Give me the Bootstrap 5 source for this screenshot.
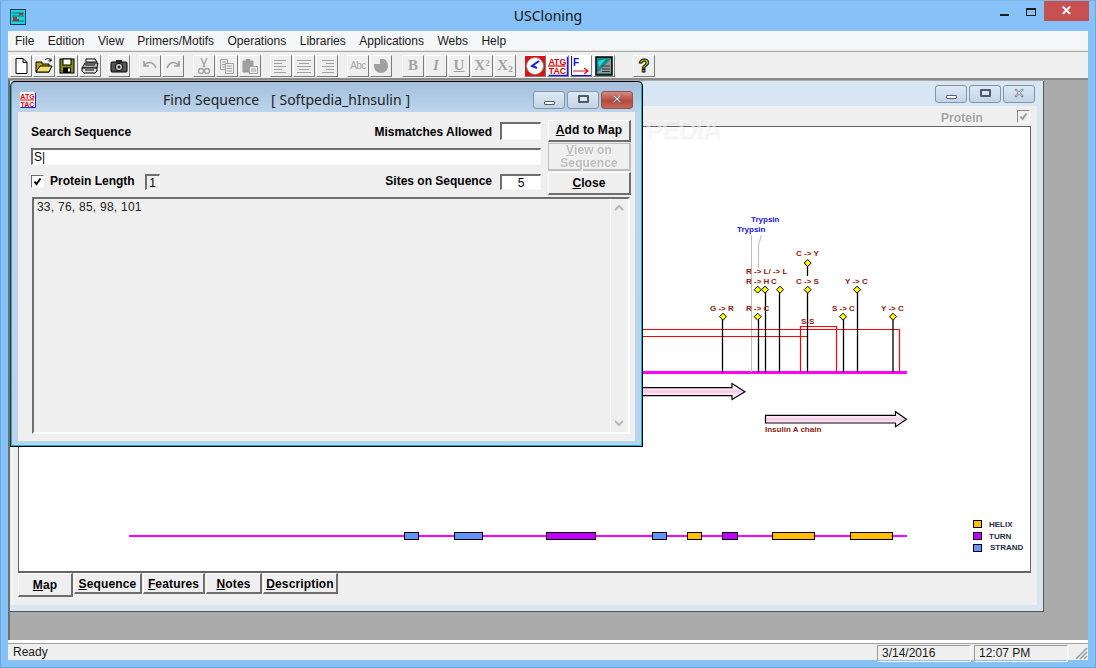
<!DOCTYPE html>
<html lang="en">
<head>
<meta charset="utf-8">
<title>USCloning</title>
<link href="https://cdn.jsdelivr.net/npm/bootstrap@5.3.0/dist/css/bootstrap.min.css" rel="stylesheet">
<style>
html,body{margin:0;width:1096px;height:668px;overflow:hidden}
body{background:#86c1f8;font-family:"Liberation Sans",sans-serif;font-size:12px;color:#000}
.appwin{width:1096px;height:668px;border:1px solid #6ea5d8;border-top-color:#7fb3e4}
.apptitle{height:30px;padding:6px 0 0 9px;position:relative}
.apptitle-text{position:absolute;left:0;right:0;top:5px;text-align:center;font:14px "Noto Sans",sans-serif;color:#111}
.ctl-min{position:absolute;left:999px;top:13px;width:9px;height:2px;background:#1c1c1c}
.ctl-max{position:absolute;left:1025px;top:7px;width:10px;height:8px;border:1px solid #1c1c1c;border-top-width:2px}
.ctl-close{position:absolute;left:1043px;top:0;width:45px;height:20px;background:#c75050;color:#fff;text-align:center;font:bold 13px/20px "Liberation Sans",sans-serif}
.shell{margin:0 7px;height:629px;background:#f0f0f0}
.menubar{height:20px;background:#f5f6f8;padding-left:7px;font-size:12px;color:#1a1a1a;line-height:20px;gap:13.500px;border-bottom:1px solid #e6e6e6}
.toolbar{height:29px;background:#efefef;border-top:1px solid #a9a9a9;border-bottom:2px solid #8a8a8a;padding:3px 0 0 2px}
.tbtn{width:22px;height:22px;margin-right:1px;background:#efefef;border:1px solid;border-color:#fff #7c7c7c #7c7c7c #fff;flex:none;padding:0;font-family:"Liberation Serif",serif;font-weight:700;font-size:15px;line-height:19px;text-align:center;color:#a4a4a4;overflow:hidden}
.tbtn svg{display:block;width:20px;height:20px}
.tsp{width:8px;flex:none}
.mdi{height:560px;background:#ababab;border-left:2px solid #6f6f6f;padding-top:1px;position:relative}
.childwin{width:1034px;height:531px;background:#d8e6f4;border-right:1px solid #555;border-bottom:1px solid #555;position:relative}
.childbtns{height:25px;padding:4px 8px 0 0;gap:2px}
.wbtn{width:32px;height:18px;border:1px solid #7f95ad;border-radius:3px;background:linear-gradient(#dfe9f4,#c3d3e5);position:relative;text-align:center;flex:none}
.wbtn.shut{background:linear-gradient(#d88a80,#b8463a 55%,#c46a5c);border-color:#8c5550}
.g-min{display:inline-block;width:11px;height:4px;margin-top:9px;background:#fff;border:1px solid #55606e;border-radius:1px;vertical-align:top}
.g-max{display:inline-block;width:11px;height:8px;margin-top:3px;border:2px solid #4d5a6a;border-radius:1px;background:#dbe5ef;vertical-align:top}
.g-x{display:block;font:bold 14px/15px "DejaVu Sans",sans-serif;color:#fff;-webkit-text-stroke:.6px #55606e}
.childbody{margin-left:1px;width:1026px;height:499px;background:#efefef;border-left:1px solid #fff;padding-left:6px}
.proto{height:20px;padding:0 7px 0 0;color:#a3a3a3;font-weight:700;font-size:12px;letter-spacing:.1px;justify-content:flex-end;align-items:center;text-shadow:1px 1px 0 #fff}
.proto span{margin-right:34px;margin-top:3px}
.chk-off{width:13px;height:13px;border:1px solid;border-color:#888 #fff #fff #888}
.chk-off svg,.chk-on svg{display:block;width:100%;height:100%}
.canvas{width:1013px;height:447px;background:#fff;border:1px solid #646464;border-bottom-width:2px;display:block;margin-left:0}
.canvas svg{display:block;width:1011px;height:444px}
.mapred{font:bold 8px "Liberation Sans",sans-serif;fill:#8a1a10}
.mapblue{font:bold 8px "Liberation Sans",sans-serif;fill:#1616e6}
.mapleg{font:bold 8px "Liberation Sans",sans-serif;fill:#222c48}
.tabsrow{gap:1px;margin-top:0;align-items:flex-start}
.tabx{height:21px;background:#efefef;border:1px solid;border-color:#fff #6e6e6e #6e6e6e #fff;border-bottom-width:2px;border-right-width:2px;font-weight:700;font-size:12px;letter-spacing:.15px;line-height:21px;text-align:center;color:#000;flex:none}
.tabx.on{height:24px;line-height:23px}
.dlg{position:absolute;left:0;top:1px;width:633px;height:366px;background:linear-gradient(#a3bfdc,#bdd5ec 30px,#bad3ec);border:1px solid #000;border-left-color:#333;box-shadow:inset -1px -1px 0 #18b4d8,inset 1px 0 0 #18b4d8;border-radius:5px 5px 0 0}
.dlg-head{height:30px;position:relative}
.dlg-ico{position:absolute;left:9px;top:10px}
.dlg-title{position:absolute;left:152px;top:8px;font:14px "Noto Sans",sans-serif;word-spacing:.3px;color:#222;white-space:pre}
.dlg-btns{position:absolute;left:522px;top:9px;gap:2px}
.dlg-client{position:absolute;left:7px;top:30px;width:617px;height:329px;background:#efefef;padding:8px 0 0 13px}
.dlab{font-weight:700;font-size:12px;line-height:16px}
.sunk{background:#fff;border:1px solid;border-color:#6e6e6e #f8f8f8 #f8f8f8 #6e6e6e;border-top-width:2px;border-left-width:2px;line-height:14px;flex:none}
.chk-on{width:13px;height:13px;background:#fff;border:1px solid;border-color:#6e6e6e #f8f8f8 #f8f8f8 #6e6e6e;flex:none}
.dbtn{width:83px;padding:0;background:#efefef;border:1px solid;border-color:#fff #6e6e6e #6e6e6e #fff;border-bottom-width:2px;border-right-width:2px;border-radius:0;font-weight:700;font-size:12px;letter-spacing:.1px;line-height:13px;color:#000;font-family:"Liberation Sans",sans-serif}
.dbtn.off{color:#a3a3a3;text-shadow:1px 1px 0 #fff}
.results{margin:2px 0 0 1px;width:598px;height:237px;border:2px solid;border-color:#6e6e6e #fff #fff #6e6e6e;padding:0 0 0 3px;position:relative;line-height:16px;letter-spacing:.2px;word-spacing:.2px;color:#222}
.rscroll{position:absolute;right:0;top:0;bottom:0;width:18px;border-left:1px solid #fff;text-align:center}
.wmark{position:absolute;left:635px;top:36px;font:bold 26px/26px "Liberation Sans",sans-serif;letter-spacing:-1px;color:rgba(255,255,255,.55);text-shadow:1px 1px 2px rgba(0,0,0,.07);pointer-events:none}
.statusbar{height:20px;background:#efefef;border-top:3px solid #fff;position:relative;box-shadow:inset 0 1px 0 #a0a0a0}
.spanel{position:absolute;top:2px;height:17px;border:1px solid;border-color:#9a9a9a #fff #fff #9a9a9a;padding-left:4px;font-size:12px;line-height:15px;color:#1a1a1a}
</style>
</head>
<body>
<svg width="0" height="0" class="position-absolute">
<defs>
<symbol id="atg" viewBox="0 0 16 16"><rect width="16" height="16" fill="#fff"/><path d="M.5 15.500H15.500V.5" fill="none" stroke="#1a1ae0"/><path d="M0 8H14" stroke="#e00000"/><text x="7.500" y="7" text-anchor="middle" font-family="Liberation Sans" font-weight="700" font-size="7" fill="#e00000">ATG</text><text x="7.500" y="14.500" text-anchor="middle" font-family="Liberation Sans" font-weight="700" font-size="7" fill="#e00000">TAC</text></symbol>
</defs>
</svg>
<div class="appwin">
  <div class="apptitle">
    <svg width="16" height="16" viewBox="0 0 16 16"><rect x=".5" y=".5" width="15" height="15" fill="#16d8d8" stroke="#0a3a5a"/><path d="M2 4H14M2 7H14M2 12H14" stroke="#086a8a"/><path d="M3 9H7M9 5H13M3 11H9" stroke="#e00000" stroke-width="1.300"/></svg>
    <div class="apptitle-text">USCloning</div>
    <div class="ctl-min"></div><div class="ctl-max"></div><div class="ctl-close">✕</div>
  </div>
  <div class="shell">
    <div class="menubar d-flex">
      <span>File</span><span>Edition</span><span>View</span><span>Primers/Motifs</span><span>Operations</span><span>Libraries</span><span>Applications</span><span>Webs</span><span>Help</span>
    </div>
    <div class="toolbar d-flex">
      <div class="tbtn"><svg viewBox="0 0 20 20"><path d="M5 2.500H12L16 6.500V17.500H5Z M12 2.500V6.500H16" fill="#fff" stroke="#000"/></svg></div>
      <div class="tbtn"><svg viewBox="0 0 20 20"><path d="M2 16V6H8V8H15V16Z" fill="#b8a020" stroke="#000"/><path d="M2 16L6 10H18L15 16Z" fill="#f0e060" stroke="#000"/><path d="M11 4C13 2 16 2 17 5M17 5V2.500M17 5H14.500" fill="none" stroke="#000"/></svg></div>
      <div class="tbtn"><svg viewBox="0 0 20 20"><rect x="3" y="3" width="14" height="14" fill="#8a8a10" stroke="#000"/><rect x="6" y="3" width="8" height="6" fill="#fff" stroke="#000"/><rect x="6" y="11.500" width="8" height="5.500" fill="#000"/><rect x="11" y="12.500" width="2" height="3" fill="#fff"/></svg></div>
      <div class="tbtn"><svg viewBox="0 0 20 20"><path d="M6 3H15L17 6H6Z" fill="#fff" stroke="#000"/><path d="M2 12L5 7H18L17 12Z" fill="#bbb" stroke="#000"/><path d="M2 12H17V15L15 17H4L2 15Z" fill="#ddd" stroke="#000"/><path d="M5 9H15M5 14H14" stroke="#000"/></svg></div>
      <div class="tsp" style="width:6px"></div>
      <div class="tbtn"><svg viewBox="0 0 20 20"><rect x="2" y="6" width="16" height="10" rx="1" fill="#555" stroke="#000"/><rect x="7" y="4" width="6" height="2" fill="#222"/><circle cx="10" cy="11" r="3.700" fill="#ccc" stroke="#000"/><circle cx="10" cy="11" r="1.500" fill="#222"/></svg></div>
      <div class="tsp"></div>
      <div class="tbtn"><svg viewBox="0 0 20 20"><path d="M4 5V10H9M4 10C7 5 13 5 16 12" fill="none" stroke="#a0a0a0" stroke-width="1.600"/></svg></div>
      <div class="tbtn"><svg viewBox="0 0 20 20"><path d="M16 5V10H11M16 10C13 5 7 5 4 12" fill="none" stroke="#a0a0a0" stroke-width="1.600"/></svg></div>
      <div class="tsp"></div>
      <div class="tbtn"><svg viewBox="0 0 20 20"><path d="M7 2L11 11M13 2L9 11" stroke="#a0a0a0" stroke-width="1.300"/><circle cx="7" cy="15" r="2.500" fill="none" stroke="#a0a0a0" stroke-width="1.300"/><circle cx="13" cy="15" r="2.500" fill="none" stroke="#a0a0a0" stroke-width="1.300"/></svg></div>
      <div class="tbtn"><svg viewBox="0 0 20 20"><path d="M3.500 3.500H10.500V13.500H3.500Z M5 6H9M5 8.500H9M5 11H9" fill="#efefef" stroke="#a0a0a0"/><path d="M8.500 7.500H16.500V17.500H8.500Z M10 10H15M10 12.500H15M10 15H15" fill="#efefef" stroke="#a0a0a0"/></svg></div>
      <div class="tbtn"><svg viewBox="0 0 20 20"><path d="M3 5H13V16H3Z" fill="#a0a0a0" stroke="#999"/><rect x="6" y="3" width="4" height="3" fill="#999"/><path d="M9.500 10.500H17.500V17.500H9.500Z M11 13H16M11 15H16" fill="#efefef" stroke="#a0a0a0"/></svg></div>
      <div class="tsp"></div>
      <div class="tbtn"><svg viewBox="0 0 20 20"><path d="M3 4.500H15M3 7.500H11M3 10.500H15M3 13.500H11M3 16.500H15" stroke="#a0a0a0"/></svg></div>
      <div class="tbtn"><svg viewBox="0 0 20 20"><path d="M3 4.500H17M5 7.500H15M3 10.500H17M5 13.500H15M3 16.500H17" stroke="#a0a0a0"/></svg></div>
      <div class="tbtn"><svg viewBox="0 0 20 20"><path d="M5 4.500H17M9 7.500H17M5 10.500H17M9 13.500H17M5 16.500H17" stroke="#a0a0a0"/></svg></div>
      <div class="tsp"></div>
      <div class="tbtn" style="font-size:10px;font-family:'Liberation Sans',sans-serif;font-weight:400;letter-spacing:-.5px">Abc</div>
      <div class="tbtn"><svg viewBox="0 0 20 20"><path d="M9 3H12C15 3 17 6 17 10C17 14 14 17 10 17C6 17 3 14 3 10V8H9Z" fill="#a0a0a0"/></svg></div>
      <div class="tsp" style="width:9px"></div>
      <div class="tbtn">B</div>
      <div class="tbtn" style="font-style:italic">I</div>
      <div class="tbtn" style="text-decoration:underline">U</div>
      <div class="tbtn">X<sup style="font-size:9px;top:-.4em">2</sup></div>
      <div class="tbtn">X<sub style="font-size:9px;bottom:-.2em">2</sub></div>
      <div class="tsp" style="width:7px"></div>
      <div class="tbtn"><svg viewBox="0 0 20 20"><rect width="20" height="20" fill="#e01010"/><circle cx="10" cy="10" r="8.500" fill="#fff" stroke="#888"/><path d="M14 5L7 10L12 12" fill="none" stroke="#1020e0" stroke-width="2"/></svg></div>
      <div class="tbtn"><svg viewBox="0 0 16 16"><use href="#atg"/></svg></div>
      <div class="tbtn"><svg viewBox="0 0 20 20"><rect width="20" height="20" fill="#fff"/><text x="2" y="10" font-family="Liberation Sans" font-weight="700" font-size="10" fill="#1010e0">F</text><path d="M2 15H16M13 12L17 15L13 18" fill="none" stroke="#e01010" stroke-width="1.200"/><path d="M.5 0V19.500H20" fill="none" stroke="#1010e0"/></svg></div>
      <div class="tbtn"><svg viewBox="0 0 20 20"><rect x="2" y="1" width="16" height="18" fill="#1a8a8a" stroke="#000" stroke-width="1.500"/><path d="M3 17L17 3V17Z" fill="#9a9a9a"/><path d="M4 5L12 3L5 11Z" fill="#18e0e0"/><path d="M8 10H16M8 13H16M8 15.500H16" stroke="#333"/></svg></div>
      <div class="tsp" style="width:17px"></div>
      <div class="tbtn" style="font-family:'Liberation Sans',sans-serif;font-size:18px;line-height:20px;color:#d8d800;-webkit-text-stroke:1px #000">?</div>
    </div>
    <div class="mdi">
      <div class="childwin">
        <div class="childbtns d-flex justify-content-end">
          <div class="wbtn"><span class="g-min"></span></div><div class="wbtn"><span class="g-max"></span></div><div class="wbtn"><span class="g-x">✕</span></div>
        </div>
        <div class="childbody">
          <div class="proto d-flex"><span>Protein</span><div class="chk-off"><svg viewBox="0 0 11 11"><path d="M2.500 5.500L4.500 8L8.500 2.500" fill="none" stroke="#999" stroke-width="1.800"/></svg></div></div>
          <div class="canvas">
            <svg viewBox="19 127 1011 444">
              <path d="M129 372.500H907" stroke="#ff00ff" stroke-width="3"/>
              <path d="M751.500 235V372M761.500 235L758.500 245V268" fill="none" stroke="#bcbcbc" stroke-width="1"/>
              <path d="M600 329.500H899.500V372M600 336.500H807" fill="none" stroke="#ff0000" stroke-width="1.200"/>
              <path d="M800.500 372V326.500H836.500V372" fill="none" stroke="#ff0000" stroke-width="1.200"/>
              <path d="M722.500 317V372M758.500 317V372M765.500 290V372M779.500 290V372M807.500 292V372M807.500 264V276M843.500 317V372M857.500 290V372M893 317V372" stroke="#000" stroke-width="1.300"/>
              <g fill="#ffff00" stroke="#000" stroke-width="1">
                <path d="M723 313.200l3.500 3.500-3.500 3.500-3.500-3.500zM757.700 313.200l3.500 3.500-3.500 3.500-3.500-3.500zM843 313.200l3.500 3.500-3.500 3.500-3.500-3.500zM893 313.200l3.500 3.500-3.500 3.500-3.500-3.500z"/>
                <path d="M757.700 286.200l3.500 3.500-3.500 3.500-3.500-3.500zM765 286.200l3.500 3.500-3.500 3.500-3.500-3.500zM780 286.200l3.500 3.500-3.500 3.500-3.500-3.500zM807.700 286.200l3.500 3.500-3.500 3.500-3.500-3.500zM857 286.200l3.500 3.500-3.500 3.500-3.500-3.500z"/>
                <path d="M807.700 259.500l3.500 3.500-3.500 3.500-3.500-3.500z"/>
              </g>
              <text class="mapblue" x="751" y="222">Trypsin</text>
              <text class="mapblue" x="737" y="232">Trypsin</text>
              <text class="mapred" x="796" y="256">C -&gt; Y</text>
              <text class="mapred" x="746" y="274">R -&gt; L/ -&gt; L</text>
              <text class="mapred" x="746" y="284">R -&gt; H</text>
              <text class="mapred" x="771" y="284">C</text>
              <text class="mapred" x="796" y="284">C -&gt; S</text>
              <text class="mapred" x="845" y="284">Y -&gt; C</text>
              <text class="mapred" x="710" y="311">G -&gt; R</text>
              <text class="mapred" x="746" y="311">R -&gt; C</text>
              <text class="mapred" x="832" y="311">S -&gt; C</text>
              <text class="mapred" x="881" y="311">Y -&gt; C</text>
              <text class="mapred" x="801" y="324">S-S</text>
              <defs><linearGradient id="pk" x1="0" y1="0" x2="0" y2="1"><stop offset=".2" stop-color="#fff"/><stop offset=".5" stop-color="#f8c8e6"/><stop offset=".8" stop-color="#fff"/></linearGradient></defs>
              <path d="M600 387.700H732V383.500L745 391.700L732 399.500V395.700H600Z" fill="url(#pk)" stroke="#000" stroke-width="1.200"/>
              <path d="M765.500 415.300H895.500V411.700L906.500 419.300L895.500 426.700V423H765.500Z" fill="url(#pk)" stroke="#000" stroke-width="1.200"/>
              <text class="mapred" x="765" y="431.500">Insulin A chain</text>
              <path d="M129 536H907" stroke="#ff00ff" stroke-width="2"/>
              <g stroke="#000" stroke-width="1">
                <rect x="404.500" y="532.500" width="14" height="7" fill="#6495ff"/>
                <rect x="454.500" y="532.500" width="28" height="7" fill="#6495ff"/>
                <rect x="546.500" y="532.500" width="49" height="7" fill="#bf00ff"/>
                <rect x="652.500" y="532.500" width="14" height="7" fill="#6495ff"/>
                <rect x="687.500" y="532.500" width="14" height="7" fill="#ffbf00"/>
                <rect x="722.500" y="532.500" width="15" height="7" fill="#bf00ff"/>
                <rect x="772.500" y="532.500" width="42" height="7" fill="#ffbf00"/>
                <rect x="850.500" y="532.500" width="42" height="7" fill="#ffbf00"/>
                <rect x="973.500" y="520.500" width="8" height="7" fill="#ffbf00"/>
                <rect x="973.500" y="532.500" width="8" height="7" fill="#bf00ff"/>
                <rect x="973.500" y="544.500" width="8" height="7" fill="#6495ff"/>
              </g>
              <text class="mapleg" x="989" y="527">HELIX</text>
              <text class="mapleg" x="989" y="539">TURN</text>
              <text class="mapleg" x="990" y="550">STRAND</text>
            </svg>
          </div>
          <div class="tabsrow d-flex">
            <div class="tabx on" style="width:55px"><u>M</u>ap</div>
            <div class="tabx" style="width:68px"><u>S</u>equence</div>
            <div class="tabx" style="width:62px"><u>F</u>eatures</div>
            <div class="tabx" style="width:56px"><u>N</u>otes</div>
            <div class="tabx" style="width:75px"><u>D</u>escription</div>
          </div>
        </div>
      </div>
      <div class="wmark">PEDIA</div>
      <div class="dlg">
        <div class="dlg-head">
          <svg class="dlg-ico" width="16" height="16" viewBox="0 0 16 16"><use href="#atg"/></svg>
          <div class="dlg-title">Find Sequence   [ Softpedia_hInsulin ]</div>
          <div class="dlg-btns d-flex">
            <div class="wbtn"><span class="g-min"></span></div><div class="wbtn"><span class="g-max"></span></div><div class="wbtn shut"><span class="g-x">✕</span></div>
          </div>
        </div>
        <div class="dlg-client">
          <div class="d-flex">
            <div class="d-flex flex-column" style="width:510px;padding-top:2px">
              <div class="d-flex justify-content-between align-items-center" style="height:18px">
                <span class="dlab" style="margin-top:1px">Search Sequence</span>
                <span class="d-flex align-items-center"><span class="dlab me-2" style="margin-top:1px">Mismatches Allowed</span><span class="sunk" style="width:41px;height:18px"></span></span>
              </div>
              <div class="sunk" style="height:17px;margin-top:8px;padding-left:1px">S|</div>
              <div class="d-flex justify-content-between align-items-center" style="height:17px;margin-top:8px">
                <span class="d-flex align-items-center">
                  <span class="chk-on"><svg viewBox="0 0 11 11"><path d="M2.500 5.500L4.500 8L8.500 2.500" fill="none" stroke="#000" stroke-width="2"/></svg></span>
                  <span class="dlab" style="margin-left:6px;margin-top:-2px">Protein Length</span>
                  <span class="sunk text-center" style="width:15px;height:16px;margin-left:10px;background:#efefef">1</span>
                </span>
                <span class="d-flex align-items-center"><span class="dlab me-2" style="margin-top:-2px">Sites on Sequence</span><span class="sunk text-center" style="width:41px;height:16px">5</span></span>
              </div>
            </div>
            <div class="d-flex flex-column" style="margin-left:7px">
              <button type="button" class="btn dbtn" style="height:22px"><u>A</u>dd to Map</button>
              <button type="button" class="btn dbtn off" style="height:28px;margin-top:1px" disabled><u>V</u>iew on<br>Sequence</button>
              <button type="button" class="btn dbtn" style="height:23px;margin-top:1px"><u>C</u>lose</button>
            </div>
          </div>
          <div class="results">33, 76, 85, 98, 101
            <div class="rscroll d-flex flex-column justify-content-between"><svg width="16" height="20" viewBox="0 0 16 20"><path d="M4 11L8 7L12 11" fill="none" stroke="#b8b8b8" stroke-width="2"/></svg><svg width="16" height="20" viewBox="0 0 16 20"><path d="M4 9L8 13L12 9" fill="none" stroke="#b8b8b8" stroke-width="2"/></svg></div>
          </div>
        </div>
      </div>
    </div>
    <div class="statusbar">
      <div class="position-absolute" style="left:5px;top:2px;font-size:12px;line-height:15px;color:#1a1a1a">Ready</div>
      <div class="spanel" style="left:869px;width:94px">3/14/2016</div>
      <div class="spanel" style="left:966px;width:94px">12:07 PM</div>
      <svg class="position-absolute" style="right:0;bottom:0" width="13" height="13" viewBox="0 0 13 13"><path d="M12 1L1 12M12 5L5 12M12 9L9 12" stroke="#9a9a9a" stroke-width="1.500"/></svg>
    </div>
  </div>
</div>
</body>
</html>
